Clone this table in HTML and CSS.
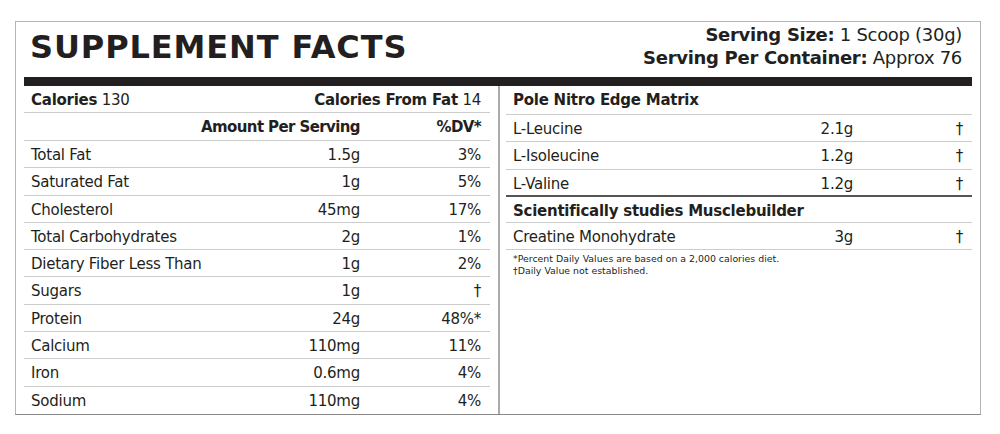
FILE: index.html
```html
<!DOCTYPE html>
<html>
<head>
<meta charset="utf-8">
<link rel="stylesheet" href="styles.css">
</head>
<body>
<div class="label">
  <div class="head">
    <h1 class="title">SUPPLEMENT FACTS</h1>
    <div class="serving">
      <div><b>Serving Size:</b> 1 Scoop (30g)</div>
      <div><b>Serving Per Container:</b> Approx 76</div>
    </div>
  </div>
  <div class="bar"></div>
  <div class="cols">
    <div class="left">
      <div class="row cal"><span><b>Calories</b> 130</span><span><b>Calories From Fat</b> 14</span></div>
      <div class="row l3 hdr"><span></span><span class="r">Amount Per Serving</span><span class="r">%DV*</span></div>
      <div class="row l3"><span>Total Fat</span><span class="r">1.5g</span><span class="r">3%</span></div>
      <div class="row l3"><span>Saturated Fat</span><span class="r">1g</span><span class="r">5%</span></div>
      <div class="row l3"><span>Cholesterol</span><span class="r">45mg</span><span class="r">17%</span></div>
      <div class="row l3"><span>Total Carbohydrates</span><span class="r">2g</span><span class="r">1%</span></div>
      <div class="row l3"><span>Dietary Fiber Less Than</span><span class="r">1g</span><span class="r">2%</span></div>
      <div class="row l3"><span>Sugars</span><span class="r">1g</span><span class="r">†</span></div>
      <div class="row l3"><span>Protein</span><span class="r">24g</span><span class="r">48%*</span></div>
      <div class="row l3"><span>Calcium</span><span class="r">110mg</span><span class="r">11%</span></div>
      <div class="row l3"><span>Iron</span><span class="r">0.6mg</span><span class="r">4%</span></div>
      <div class="row l3 last"><span>Sodium</span><span class="r">110mg</span><span class="r">4%</span></div>
    </div>
    <div class="divider"></div>
    <div class="right">
      <div class="row sect"><b>Pole Nitro Edge Matrix</b></div>
      <div class="row r3"><span>L-Leucine</span><span class="r">2.1g</span><span class="r">†</span></div>
      <div class="row r3"><span>L-Isoleucine</span><span class="r">1.2g</span><span class="r">†</span></div>
      <div class="row r3 dark"><span>L-Valine</span><span class="r">1.2g</span><span class="r">†</span></div>
      <div class="row sect sect2"><b>Scientifically studies Musclebuilder</b></div>
      <div class="row r3"><span>Creatine Monohydrate</span><span class="r">3g</span><span class="r">†</span></div>
      <div class="notes">
        <div>*Percent Daily Values are based on a 2,000 calories diet.</div>
        <div>†Daily Value not established.</div>
      </div>
    </div>
  </div>
</div>
</body>
</html>
```
FILE: styles.css
```css
html, body {
  margin: 0;
  padding: 0;
  background: #fff;
}
body {
  font-family: "DejaVu Sans", "Liberation Sans", sans-serif;
  color: #231f20;
}
.label {
  margin: 21px 0 0 15px;
  width: 948px;
  padding: 0 8px;
  border: 1px solid #b5b5b5;
  border-bottom-color: #888;
}
.head {
  display: flex;
  justify-content: space-between;
  align-items: flex-start;
  height: 55px;
}
.title {
  margin: 0;
  padding: 9px 0 0 6px;
  font-size: 32px;
  line-height: 32px;
  font-weight: bold;
  letter-spacing: 0.9px;
  white-space: nowrap;
}
.serving {
  padding: 1px 10px 0 0;
  text-align: right;
  font-size: 18px;
  line-height: 23px;
  letter-spacing: -0.3px;
  white-space: nowrap;
}
.bar {
  height: 9px;
  background: #231f20;
}
.cols {
  display: flex;
}
.left, .right {
  width: 466px;
}
.divider {
  width: 2px;
  background: #aaa;
  margin: 0 6px 0 8px;
}
.row {
  line-height: 28px;
  font-size: 15px;
  letter-spacing: -0.25px;
  padding: 0 9px 0 7px;
  border-bottom: 1px solid #ccc;
  box-sizing: border-box;
  height: 27.3px;
  white-space: nowrap;
}
.row b { font-weight: bold; }
.cal {
  display: flex;
  justify-content: space-between;
  height: 27px;
}
.l3 {
  display: grid;
  grid-template-columns: minmax(0, 1fr) 170px 121px;
}
.hdr {
  font-weight: bold;
  letter-spacing: -0.6px;
  height: 28px;
}
.last {
  border-bottom: none;
}
.r { text-align: right; }
.sect {
  height: 29px;
}
.sect2 { height: 26px; }
.r3 {
  display: grid;
  grid-template-columns: minmax(0, 1fr) 110px 110px;
}
.dark {
  border-bottom: 2px solid #555;
}
.notes {
  padding: 3px 0 0 7px;
  font-size: 9.4px;
  line-height: 12px;
}
```
